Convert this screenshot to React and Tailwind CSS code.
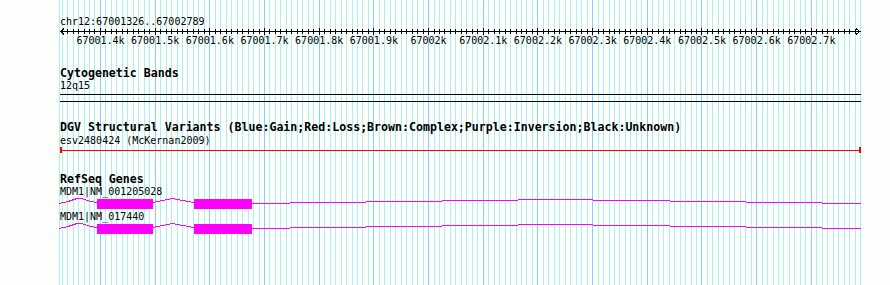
import React from "react";

const START = 67001326;
const END = 67002789;
const X0 = 60;
const SPAN = 800;
const px = (bp) => X0 + ((bp - START) * SPAN) / (END - START);

const grid = [];
for (let bp = 67001330; bp <= 67002780; bp += 10) {
  grid.push({ x: Math.floor(px(bp)), major: bp % 100 === 0, bp });
}

const labels = [];
for (let bp = 67001400; bp <= 67002700; bp += 100) {
  const k = (bp / 1000).toString();
  labels.push({ x: px(bp), text: k + "k" });
}

function Grid() {
  return (
    <svg className="absolute inset-0" width="890" height="285" shapeRendering="crispEdges">
      <line x1="59.5" y1="0" x2="59.5" y2="285" stroke="#afeeee" strokeWidth="1" />
      {grid.map((g) => (
        <line
          key={g.bp}
          x1={g.x + 0.5}
          y1="0"
          x2={g.x + 0.5}
          y2="285"
          stroke={g.major ? "#87cefa" : "#afeeee"}
          strokeWidth="1"
        />
      ))}
      <line x1="860.5" y1="0" x2="860.5" y2="285" stroke="#afeeee" strokeWidth="1" />
    </svg>
  );
}

function Ruler() {
  return (
    <svg width="890" height="20" className="block" shapeRendering="crispEdges">
      <line x1="60" y1="4.5" x2="861" y2="4.5" stroke="#000" />
      <polyline points="64,1.5 60.5,4.5 64,7.5" fill="none" stroke="#000" />
      <polyline points="856,1.5 859.5,4.5 856,7.5" fill="none" stroke="#000" />
      {grid.map((g) => (
        <line
          key={g.bp}
          x1={g.x + 0.5}
          y1={g.major ? 1 : 2}
          x2={g.x + 0.5}
          y2={g.major ? 8 : 7}
          stroke="#000"
        />
      ))}
      {labels.map((l) => (
        <text
          key={l.text}
          x={l.x}
          y="16.5"
          textAnchor="middle"
          fontFamily="'DejaVu Sans Mono', monospace"
          fontSize="10"
          fill="#000"
          shapeRendering="auto"
        >
          {l.text}
        </text>
      ))}
    </svg>
  );
}

function Gene() {
  const steps = [
    [252, 290, 6],
    [290, 366, 5],
    [366, 442, 4],
    [442, 518, 3],
    [518, 593, 2],
    [593, 670, 3],
    [670, 746, 4],
    [746, 822, 5],
    [822, 861, 6],
  ];
  return (
    <svg width="890" height="14" className="block" shapeRendering="crispEdges">
      <polyline points="59,6.5 68,4.5 77,1.5 82,1.5 90,4.5 97,5.5" fill="none" stroke="#ff00ff" />
      <polyline points="153,5.5 172,1.5 194,5.5" fill="none" stroke="#ff00ff" />
      {steps.map(([a, b, r]) => (
        <line key={a} x1={a} y1={r + 0.5} x2={b} y2={r + 0.5} stroke="#ff00ff" />
      ))}
      <rect x="97" y="2" width="56" height="10" fill="#ff00ff" />
      <rect x="194" y="2" width="58" height="10" fill="#ff00ff" />
    </svg>
  );
}

export default function App() {
  return (
    <div className="relative w-[890px] h-[285px] overflow-hidden bg-[#fcfffc] text-black font-['DejaVu_Sans_Mono',monospace]">
      <Grid />
      <div className="relative flex flex-col">
        <div className="pl-[60px] pt-[16px] text-[10px] leading-[11px] h-[27px]">
          chr12:67001326..67002789
        </div>
        <Ruler />

        <div className="mt-[21px] pl-[60px] text-[11.6px] font-bold leading-[11px] h-[11px] whitespace-nowrap">
          Cytogenetic Bands
        </div>
        <div className="mt-[1px] pl-[60px] text-[10px] leading-[11px] h-[11px]">12q15</div>
        <div className="flex flex-col pl-[60px] pr-[29px] pt-[3px] h-[14px]">
          <div className="h-[1px] bg-black" />
          <div className="h-[6px]" />
          <div className="h-[1px] bg-black" />
        </div>

        <div className="mt-[17px] pl-[60px] text-[11.6px] font-bold leading-[11px] h-[11px] whitespace-nowrap">
          DGV Structural Variants (Blue:Gain;Red:Loss;Brown:Complex;Purple:Inversion;Black:Unknown)
        </div>
        <div className="mt-[2px] pl-[60px] text-[10px] leading-[11px] h-[11px]">esv2480424 (McKernan2009)</div>
        <div className="flex items-center pl-[60px] pr-[29px] h-[10px] pt-[1px] pb-[3px]">
          <div className="w-[2px] h-[6px] bg-[#ff0000]" />
          <div className="flex-1 h-[1px] bg-[#ff0000]" />
          <div className="w-[2px] h-[6px] bg-[#ff0000]" />
        </div>

        <div className="mt-[18px] pl-[60px] text-[11.6px] font-bold leading-[11px] h-[11px] whitespace-nowrap">
          RefSeq Genes
        </div>
        <div className="mt-[1px] pl-[60px] text-[10px] leading-[11px] h-[11px]">MDM1|NM_001205028</div>
        <Gene />
        <div className="pl-[60px] text-[10px] leading-[11px] h-[11px]">MDM1|NM_017440</div>
        <Gene />
      </div>
    </div>
  );
}
